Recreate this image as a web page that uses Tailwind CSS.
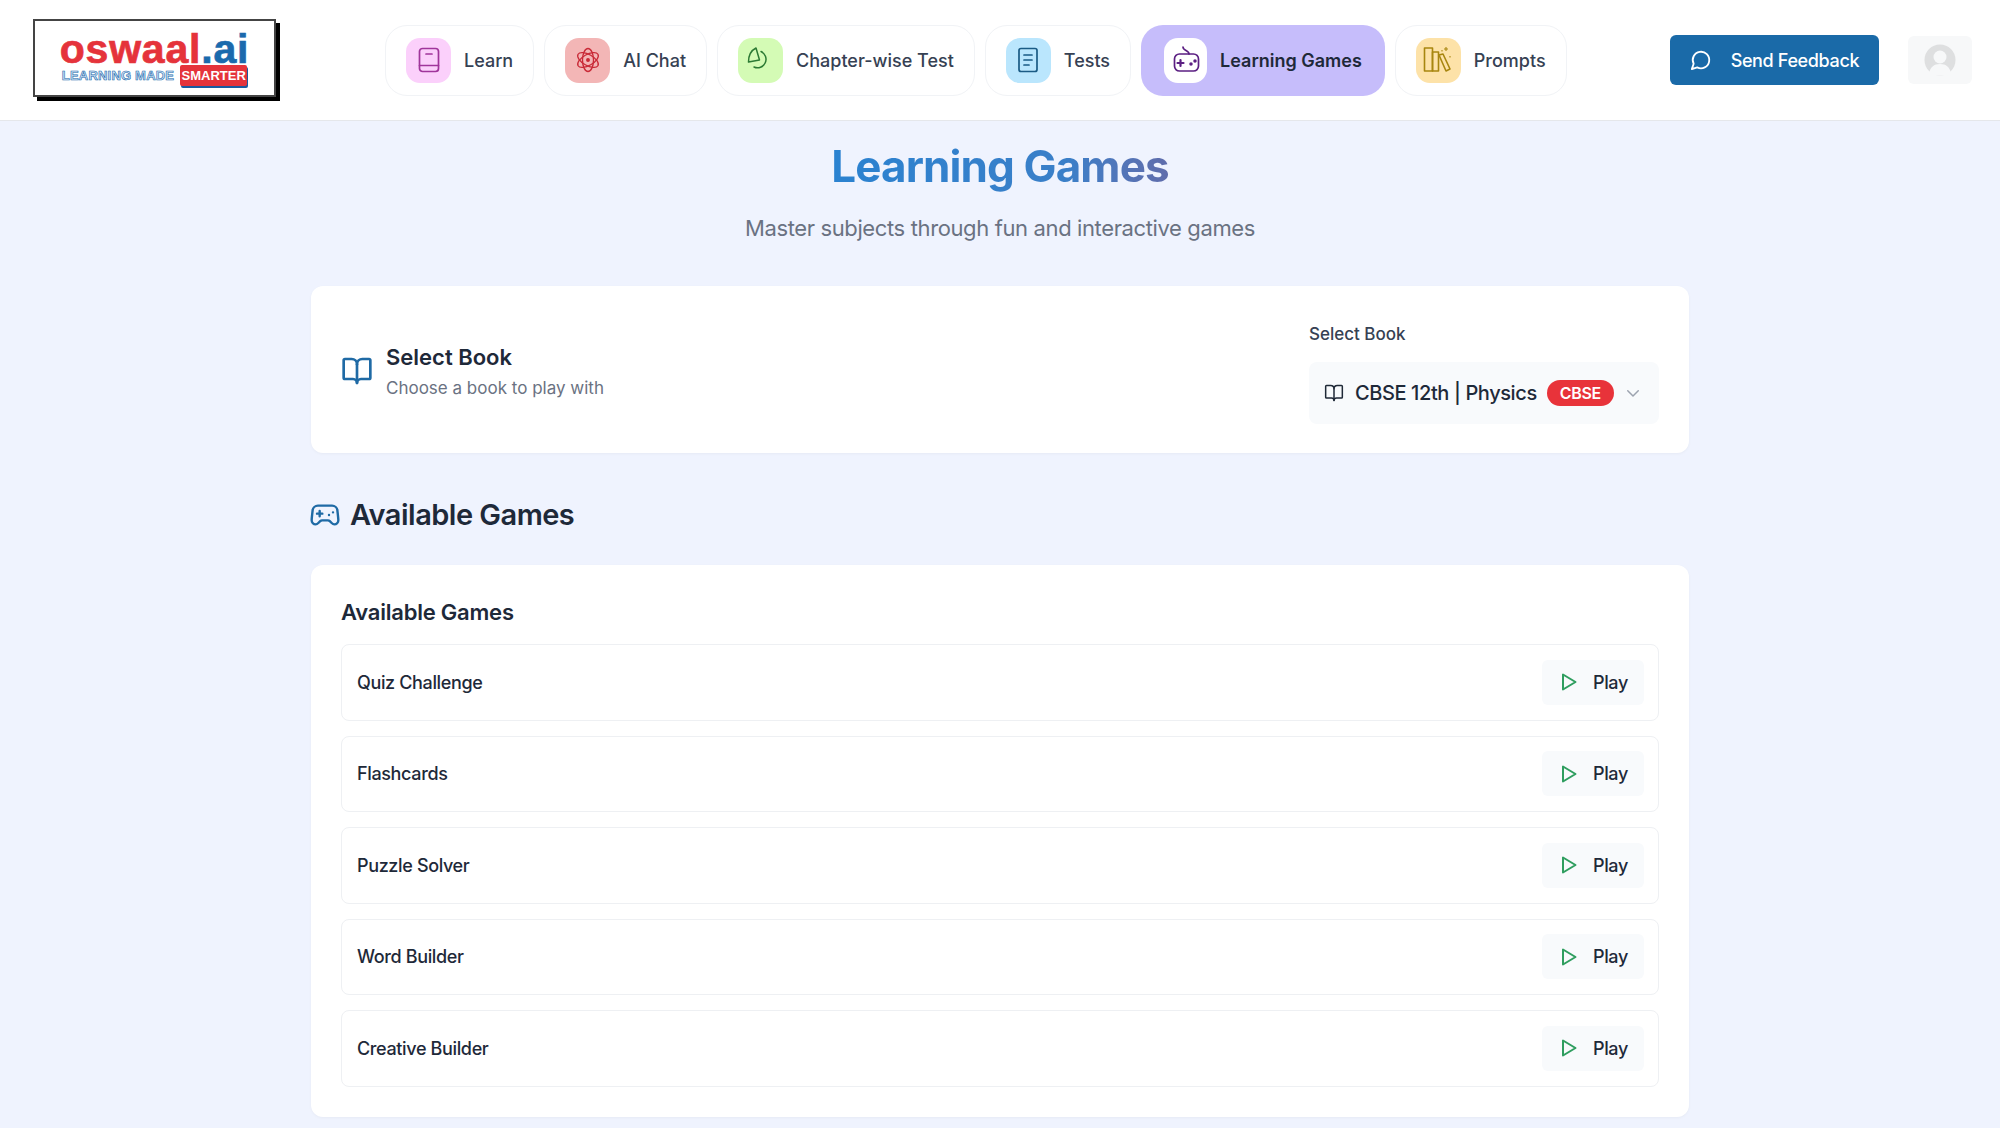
<!DOCTYPE html>
<html lang="en">
<head>
  <meta charset="UTF-8"/>
  <title>Learning Games</title>
  <script src="https://cdn.jsdelivr.net/npm/@tailwindcss/browser@4"></script>
</head>
<body class="bg-[#eff3fe] font-['Inter',sans-serif] text-gray-800 h-[1128px] overflow-hidden">

  <!-- Header -->
  <header class="h-[121px] bg-white border-b border-[#e5e7eb] flex items-center pl-[33px]">
    <!-- Logo -->
    <div class="w-[243px] h-[78px] mt-[-4px] bg-white border-2 border-[#444] shadow-[4px_4px_0_#000] flex flex-col items-center justify-center">
      <div class="font-['Liberation_Sans',sans-serif] font-bold text-[41px] leading-[38px] tracking-[0.8px] mt-[-1px] [-webkit-text-stroke:0.7px_currentColor] text-[#e5333b]">oswaal<span class="text-[#1a6aad]">.ai</span></div>
      <div class="flex items-center gap-[6px] mt-[-3px] font-['Liberation_Sans',sans-serif] font-bold">
        <span class="text-[13px] leading-none text-[#cfe3f5] tracking-[0.2px] [-webkit-text-stroke:0.6px_#1a6aad]">LEARNING MADE</span>
        <span class="w-[67px] text-center bg-[#e5333b] text-white text-[13px] leading-[21px] rounded-[2px] shadow-[1px_2px_0_#1a5aa0]">SMARTER</span>
      </div>
    </div>

    <!-- Nav -->
    <nav class="flex items-center gap-[10px] ml-[109px] text-[18px] font-medium text-gray-700">
      <a class="h-[71px] flex items-center gap-[13px] px-[20px] bg-white border border-[#f1f3f6] rounded-[22px]">
        <span class="w-[45px] h-[45px] rounded-[14px] bg-[#fbd0fb] flex items-center justify-center">
          <svg class="w-[24px] h-[26px]" viewBox="0 0 24 26" fill="none" stroke="#a0359b" stroke-width="1.7" stroke-linecap="round" stroke-linejoin="round"><rect x="2.500" y="1.500" width="19" height="23" rx="3"/><path d="M2.500 18.500h19"/><path d="M9 7h6"/></svg>
        </span>
        Learn
      </a>
      <a class="h-[71px] flex items-center gap-[13px] px-[20px] bg-white border border-[#f1f3f6] rounded-[22px]">
        <span class="w-[45px] h-[45px] rounded-[14px] bg-[#f3b6b6] flex items-center justify-center">
          <svg class="w-[26px] h-[26px]" viewBox="0 0 26 26" fill="none" stroke="#c92a37" stroke-width="1.3"><ellipse cx="13" cy="13" rx="5.500" ry="11.500"/><ellipse cx="13" cy="13" rx="5.500" ry="11.500" transform="rotate(60 13 13)"/><ellipse cx="13" cy="13" rx="5.500" ry="11.500" transform="rotate(-60 13 13)"/><circle cx="13" cy="13" r="1.300" fill="#c92a37"/></svg>
        </span>
        AI Chat
      </a>
      <a class="h-[71px] flex items-center gap-[13px] px-[20px] bg-white border border-[#f1f3f6] rounded-[22px]">
        <span class="w-[45px] h-[45px] rounded-[14px] bg-[#d4fbb5] flex items-center justify-center">
          <svg class="w-[30px] h-[30px]" viewBox="0 0 30 30" fill="none" stroke="#2c7a34" stroke-width="1.500" stroke-linejoin="round" stroke-linecap="round"><path d="M2.500 17C2.500 10 6 5 10 3L13.500 15Z"/><path d="M15 6.500A8.500 8.500 0 1 1 8 22"/></svg>
        </span>
        Chapter-wise Test
      </a>
      <a class="h-[71px] flex items-center gap-[13px] px-[20px] bg-white border border-[#f1f3f6] rounded-[22px]">
        <span class="w-[45px] h-[45px] rounded-[14px] bg-[#bae6fd] flex items-center justify-center">
          <svg class="w-[22px] h-[26px]" viewBox="0 0 22 26" fill="none" stroke="#1a5b85" stroke-width="1.700" stroke-linecap="round"><rect x="2" y="1.500" width="18" height="23" rx="2"/><path d="M7 8h8M7 13h8M7 18h5"/></svg>
        </span>
        Tests
      </a>
      <a class="h-[71px] flex items-center gap-[13px] px-[23px] bg-[#c6bdfb] rounded-[22px] font-semibold text-gray-800">
        <span class="w-[43px] h-[45px] rounded-[14px] bg-white flex items-center justify-center">
          <svg class="w-[30px] h-[30px]" viewBox="0 0 30 30" fill="none" stroke="#5b1f82" stroke-width="1.700" stroke-linecap="round" stroke-linejoin="round"><path d="M12 2c0 4 6 3 6 7"/><rect x="3.500" y="9" width="24" height="17" rx="5"/><path d="M6.500 18h6M9.500 15v6" stroke-width="2.200"/><circle cx="20" cy="19" r="0.900" fill="#5b1f82"/><circle cx="24" cy="16" r="0.900" fill="#5b1f82"/></svg>
        </span>
        Learning Games
      </a>
      <a class="h-[71px] flex items-center gap-[13px] px-[20px] bg-white border border-[#f1f3f6] rounded-[22px]">
        <span class="w-[45px] h-[45px] rounded-[14px] bg-[#fde2a8] flex items-center justify-center">
          <svg class="w-[30px] h-[30px]" viewBox="0 0 30 30" fill="none" stroke="#a8860f" stroke-width="1.600" stroke-linejoin="round"><rect x="1.500" y="3" width="8" height="23"/><rect x="9.500" y="7" width="6" height="19"/><path d="M16 10l4-1 7 15-4 2z"/><path d="M23 2v4M21 4h4" stroke-width="1.100"/><path d="M27 11v1.500M19 5v1.500" stroke-width="1.100"/></svg>
        </span>
        Prompts
      </a>
    </nav>

    <!-- Feedback and avatar -->
    <button class="ml-[103px] w-[209px] h-[50px] rounded-[6px] bg-[#1a6aa8] text-white text-[18px] font-medium tracking-[-0.02em] flex items-center pl-[20px] gap-[19px]">
      <svg class="w-[22px] h-[22px]" viewBox="0 0 24 24" fill="none" stroke="#fff" stroke-width="2" stroke-linecap="round" stroke-linejoin="round"><path d="M7.900 20A9 9 0 1 0 4 16.100L2 22Z"/></svg>
      Send Feedback
    </button>
    <div class="ml-[29px] w-[64px] h-[48px] rounded-[6px] bg-[#f7f8f9] flex items-center justify-center">
      <svg class="w-[32px] h-[32px]" viewBox="0 0 32 32"><circle cx="16" cy="16" r="15.500" fill="#dedfe0"/><circle cx="16" cy="13" r="6.500" fill="#f7f8f9"/><path d="M5 30c1-7 5-10 11-10s10 3 11 10c-3 2-19 2-22 0Z" fill="#f7f8f9"/></svg>
    </div>
  </header>

  <main class="w-[1378px] ml-[311px]">
    <h1 class="text-[44px] leading-[56px] font-bold tracking-[-0.02em] text-center mt-[17px]"><span class="bg-linear-to-r from-[#2a82d0] via-[#3a7fc8] via-70% to-[#5f6cab] bg-clip-text text-transparent">Learning Games</span></h1>
    <p class="text-[22px] leading-[32px] tracking-[-0.017em] text-gray-500 text-center mt-[18px]">Master subjects through fun and interactive games</p>

    <!-- Book selector -->
    <section class="mt-[42px] h-[167px] pt-[2px] bg-white rounded-[12px] shadow-[0_1px_3px_rgba(0,0,0,0.04)] flex items-center justify-between px-[30px]">
      <div class="flex items-center gap-[13px]">
        <svg class="w-[32px] h-[32px]" viewBox="0 0 24 24" fill="none" stroke="#1f6aa5" stroke-width="2" stroke-linecap="round" stroke-linejoin="round"><path d="M12 7v14"/><path d="M3 18a1 1 0 0 1-1-1V4a1 1 0 0 1 1-1h5a4 4 0 0 1 4 4 4 4 0 0 1 4-4h5a1 1 0 0 1 1 1v13a1 1 0 0 1-1 1h-6a3 3 0 0 0-3 3 3 3 0 0 0-3-3z"/></svg>
        <div>
          <h2 class="text-[22px] leading-[30px] font-semibold text-gray-800">Select Book</h2>
          <p class="text-[17px] leading-[24px] mt-[4px] text-gray-500">Choose a book to play with</p>
        </div>
      </div>
      <div class="w-[350px] mt-[5px]">
        <label class="block text-[17px] leading-[24px] font-medium text-gray-700">Select Book</label>
        <div class="mt-[16px] h-[62px] bg-[#f8fafc] rounded-[8px] flex items-center pl-[15px] pr-[17px]">
          <svg class="w-[20px] h-[20px]" viewBox="0 0 24 24" fill="none" stroke="#1f2937" stroke-width="1.800" stroke-linecap="round" stroke-linejoin="round"><path d="M12 7v14"/><path d="M3 18a1 1 0 0 1-1-1V4a1 1 0 0 1 1-1h5a4 4 0 0 1 4 4 4 4 0 0 1 4-4h5a1 1 0 0 1 1 1v13a1 1 0 0 1-1 1h-6a3 3 0 0 0-3 3 3 3 0 0 0-3-3z"/></svg>
          <span class="ml-[11px] text-[20px] font-medium tracking-[-0.02em] text-gray-800 whitespace-nowrap">CBSE 12th | Physics</span>
          <span class="ml-[10px] w-[67px] h-[26px] rounded-full bg-[#e8333a] text-white text-[16px] font-semibold tracking-[-0.02em] flex items-center justify-center">CBSE</span>
          <svg class="ml-auto w-[18px] h-[18px]" viewBox="0 0 24 24" fill="none" stroke="#9ca3af" stroke-width="2" stroke-linecap="round" stroke-linejoin="round"><path d="m5 9 7 7 7-7"/></svg>
        </div>
      </div>
    </section>

    <!-- Section heading -->
    <div class="flex items-center gap-[9px] mt-[44px] h-[36px] ml-[-2px]">
      <svg class="w-[32px] h-[32px]" viewBox="0 0 24 24" fill="none" stroke="#1f6aa5" stroke-width="1.800" stroke-linecap="round" stroke-linejoin="round"><path d="M6 11h4M8 9v4M15 12h.01M18 10h.01"/><path d="M17.300 5H6.700a4 4 0 0 0-4 3.600C2.700 9 2 14.300 2 16a3 3 0 0 0 3 3c1 0 1.500-.5 2-1l1.400-1.400A2 2 0 0 1 9.800 16h4.400a2 2 0 0 1 1.400.6L17 18c.5.500 1 1 2 1a3 3 0 0 0 3-3c0-1.700-.7-7-.7-7.400A4 4 0 0 0 17.300 5Z"/></svg>
      <h2 class="text-[29px] font-semibold tracking-[-0.018em] text-gray-800">Available Games</h2>
    </div>

    <!-- Games list -->
    <section class="mt-[32px] h-[552px] bg-white rounded-[12px] shadow-[0_1px_3px_rgba(0,0,0,0.04)] px-[30px] pt-[30px]">
      <h3 class="text-[22px] leading-[34px] font-semibold tracking-[-0.01em] text-gray-800">Available Games</h3>
      <ul class="mt-[15px] flex flex-col gap-[15px] text-[18px] font-medium tracking-[-0.02em] text-gray-800">
        <li class="h-[76.500px] rounded-[8px] border border-[#eef0f3] flex items-center justify-between pl-[15px] pr-[14px]">
          <span>Quiz Challenge</span>
          <button class="w-[102px] h-[45px] rounded-[6px] bg-[#f8fafc] flex items-center pl-[19px] gap-[16px]">
            <svg class="w-[16px] h-[18px]" viewBox="0 0 16 18" fill="none" stroke="#2f9e5f" stroke-width="2" stroke-linejoin="round"><path d="M2 1.500v15L14.500 9Z"/></svg>
            Play
          </button>
        </li>
        <li class="h-[76.500px] rounded-[8px] border border-[#eef0f3] flex items-center justify-between pl-[15px] pr-[14px]">
          <span>Flashcards</span>
          <button class="w-[102px] h-[45px] rounded-[6px] bg-[#f8fafc] flex items-center pl-[19px] gap-[16px]">
            <svg class="w-[16px] h-[18px]" viewBox="0 0 16 18" fill="none" stroke="#2f9e5f" stroke-width="2" stroke-linejoin="round"><path d="M2 1.500v15L14.500 9Z"/></svg>
            Play
          </button>
        </li>
        <li class="h-[76.500px] rounded-[8px] border border-[#eef0f3] flex items-center justify-between pl-[15px] pr-[14px]">
          <span>Puzzle Solver</span>
          <button class="w-[102px] h-[45px] rounded-[6px] bg-[#f8fafc] flex items-center pl-[19px] gap-[16px]">
            <svg class="w-[16px] h-[18px]" viewBox="0 0 16 18" fill="none" stroke="#2f9e5f" stroke-width="2" stroke-linejoin="round"><path d="M2 1.500v15L14.500 9Z"/></svg>
            Play
          </button>
        </li>
        <li class="h-[76.500px] rounded-[8px] border border-[#eef0f3] flex items-center justify-between pl-[15px] pr-[14px]">
          <span>Word Builder</span>
          <button class="w-[102px] h-[45px] rounded-[6px] bg-[#f8fafc] flex items-center pl-[19px] gap-[16px]">
            <svg class="w-[16px] h-[18px]" viewBox="0 0 16 18" fill="none" stroke="#2f9e5f" stroke-width="2" stroke-linejoin="round"><path d="M2 1.500v15L14.500 9Z"/></svg>
            Play
          </button>
        </li>
        <li class="h-[76.500px] rounded-[8px] border border-[#eef0f3] flex items-center justify-between pl-[15px] pr-[14px]">
          <span>Creative Builder</span>
          <button class="w-[102px] h-[45px] rounded-[6px] bg-[#f8fafc] flex items-center pl-[19px] gap-[16px]">
            <svg class="w-[16px] h-[18px]" viewBox="0 0 16 18" fill="none" stroke="#2f9e5f" stroke-width="2" stroke-linejoin="round"><path d="M2 1.500v15L14.500 9Z"/></svg>
            Play
          </button>
        </li>
      </ul>
    </section>
  </main>
</body>
</html>
